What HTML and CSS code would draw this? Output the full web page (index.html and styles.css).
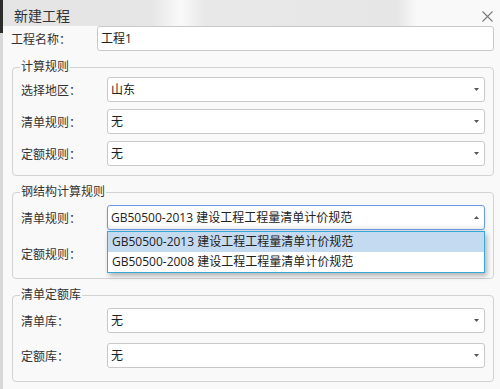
FILE: index.html
```html
<!DOCTYPE html>
<html lang="zh-CN">
<head>
<meta charset="utf-8">
<title>新建工程</title>
<link rel="stylesheet" href="styles.css">
</head>
<body>
<div class="edge"></div>
<div class="dlg">
  <div class="titlebar">
    <span class="title">新建工程</span>
    <span class="close"><svg width="11" height="11" viewBox="0 0 11 11"><path d="M0.5 0.5 L10.5 10.5 M10.5 0.5 L0.5 10.5" stroke="#7a7a7a" stroke-width="1.1" fill="none"/></svg></span>
  </div>
  <div class="name-row">
    <span class="name-lbl">工程名称：</span>
    <div class="input">工程1</div>
  </div>

  <fieldset class="grp g1">
    <legend>计算规则</legend>
    <div class="row"><span class="lbl">选择地区：</span><div class="sel"><span>山东</span><svg class="arr" width="5" height="3" viewBox="0 0 5 3"><path d="M0 0H5L2.5 3Z" fill="#555"/></svg></div></div>
    <div class="row"><span class="lbl">清单规则：</span><div class="sel"><span>无</span><svg class="arr" width="5" height="3" viewBox="0 0 5 3"><path d="M0 0H5L2.5 3Z" fill="#555"/></svg></div></div>
    <div class="row"><span class="lbl">定额规则：</span><div class="sel"><span>无</span><svg class="arr" width="5" height="3" viewBox="0 0 5 3"><path d="M0 0H5L2.5 3Z" fill="#555"/></svg></div></div>
  </fieldset>

  <fieldset class="grp g2">
    <legend>钢结构计算规则</legend>
    <div class="row"><span class="lbl">清单规则：</span>
      <div class="sel open"><span>GB50500-2013 建设工程工程量清单计价规范</span><svg class="arr" width="5" height="3" viewBox="0 0 5 3"><path d="M0 3H5L2.5 0Z" fill="#555"/></svg>
        <ul class="dropdown">
          <li class="active">GB50500-2013 建设工程工程量清单计价规范</li>
          <li>GB50500-2008 建设工程工程量清单计价规范</li>
        </ul>
      </div>
    </div>
    <div class="row"><span class="lbl">定额规则：</span><div class="sel"><span>无</span><svg class="arr" width="5" height="3" viewBox="0 0 5 3"><path d="M0 0H5L2.5 3Z" fill="#555"/></svg></div></div>
  </fieldset>

  <fieldset class="grp g3">
    <legend>清单定额库</legend>
    <div class="row"><span class="lbl">清单库：</span><div class="sel"><span>无</span><svg class="arr" width="5" height="3" viewBox="0 0 5 3"><path d="M0 0H5L2.5 3Z" fill="#555"/></svg></div></div>
    <div class="row"><span class="lbl">定额库：</span><div class="sel"><span>无</span><svg class="arr" width="5" height="3" viewBox="0 0 5 3"><path d="M0 0H5L2.5 3Z" fill="#555"/></svg></div></div>
  </fieldset>
</div>
</body>
</html>
```
FILE: styles.css
```css
* { box-sizing: border-box; margin: 0; padding: 0; }
html { background: #f9f9f9; }
html, body { width: 500px; height: 389px; overflow: hidden; }
body {
  font-family: "Open Sans", "Noto Sans CJK SC", "Microsoft YaHei", sans-serif;
  font-size: 12px;
  color: #333;
  background: #f9f9f9;
  display: flex;
}
.edge {
  width: 3px;
  flex: none;
  background: linear-gradient(#2c2c2c 0, #2c2c2c 33px, #d8d8d8 33px);
}
.dlg { flex: 1; display: flex; flex-direction: column; min-width: 0; background: #f9f9f9; }

.titlebar {
  height: 26px;
  display: flex;
  align-items: flex-start;
  padding: 6px 0 0 11px;
  background-color: #f9f9f9;
  background-image: linear-gradient(90deg, #e4e4e4 0, #e6e6e6 148px, #f9f9f9 178px, #e8e8e8 202px, #e6e6e6 394px, #f9f9f9 414px, #f9f9f9 100%);
}
.title { font-size: 14px; line-height: 20px; color: #333; flex: 1; }
.close { display: block; width: 11px; height: 11px; margin: 5px 7px 0 0; overflow: hidden; }
.close svg { display: block; }

.name-row { display: flex; align-items: center; height: 25px; }
.name-lbl { width: 94px; padding-left: 8px; flex: none; }
.input {
  width: 397px;
  height: 25px;
  border: 1px solid #c9c9c9;
  border-radius: 3px;
  background: #fff;
  padding-left: 3px;
  line-height: 23px;
  color: #222;
}

.grp {
  margin: 8px 6px 0 9px;
  border: 1px solid #d2d2d2;
  border-radius: 4px;
  padding: 5px 8px 12px 8px;
  min-width: 0;
  display: flex;
  flex-direction: column;
}
.grp legend { padding: 0 1px; margin-left: -1px; line-height: 16px; font-size: 12px; color: #333; }
.g1 { padding-top: 2px; padding-bottom: 9px; gap: 7px; }
.g2 { gap: 11px; }
.g3 { gap: 10px; padding-bottom: 13px; }

.row { display: flex; align-items: center; height: 25px; }
.lbl { width: 86px; flex: none; }
.sel {
  position: relative;
  flex: 1;
  height: 25px;
  border: 1px solid #c9c9c9;
  border-radius: 3px;
  background: #fff;
  padding: 0 5px 0 3px;
  line-height: 23px;
  color: #222;
  display: flex;
  align-items: center;
  justify-content: space-between;
}
.arr { flex: none; }
.sel.open {
  border-color: #6b9be3;
  box-shadow: inset 0 -4px 5px -3px rgba(0,0,0,0.12), 0 2px 3px rgba(0,0,0,0.12);
  z-index: 2;
}
.dropdown {
  list-style: none;
  position: absolute;
  top: calc(100% + 2px);
  left: -1px;
  right: -1px;
  border: 1px solid #37a8da;
  background: #fff;
  box-shadow: 2px 3px 5px rgba(0,0,0,0.28);
}
.dropdown li { height: 20px; line-height: 20px; padding-left: 4px; color: #222; }
.dropdown li.active { background: #c4daf1; }
```
